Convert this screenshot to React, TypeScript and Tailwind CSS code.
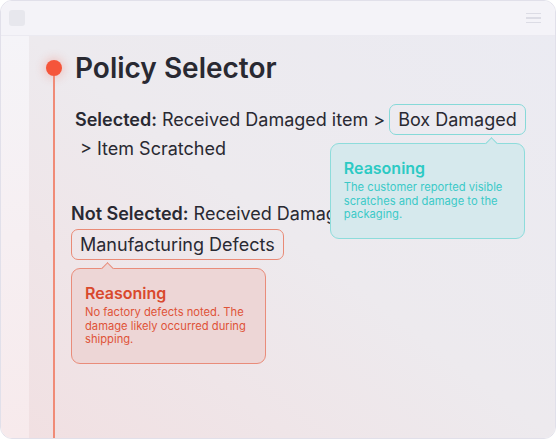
import React from "react";

const font = { fontFamily: "Inter, 'Noto Sans', sans-serif" };

function Reasoning({
  tone,
  text,
  className,
  arrowClass,
}: {
  tone: "teal" | "red";
  text: string;
  className: string;
  arrowClass: string;
}) {
  const teal = tone === "teal";
  return (
    <div
      className={`absolute z-10 w-[195px] rounded-[9px] border px-[13px] pt-[14px] pb-[16px] ${
        teal ? "border-[#8ddcdb] bg-[#d6e9ed]" : "border-[#e98c7a] bg-[#edd6d6]"
      } ${className}`}
    >
      {/* arrow */}
      <div
        className={`absolute top-[-5px] h-[9px] w-[9px] rotate-45 border-l border-t ${
          teal ? "border-[#8ddcdb] bg-[#d6e9ed]" : "border-[#e98c7a] bg-[#edd6d6]"
        } ${arrowClass}`}
      />
      <div
        className={`text-[16px] leading-[20px] font-semibold ${
          teal ? "text-[#2ccac4]" : "text-[#d9492d]"
        }`}
      >
        Reasoning
      </div>
      <p
        className={`mt-[3px] text-[11.2px] leading-[13.5px] ${
          teal ? "text-[#3cc9c8]" : "text-[#df5338]"
        }`}
      >
        {text}
      </p>
    </div>
  );
}

export default function App() {
  return (
    <div className="h-[439px] w-[556px] bg-white" style={font}>
      <div className="flex h-full w-full flex-col overflow-hidden rounded-[12px] border border-[#e1e0ea]">
        {/* Window bar */}
        <div className="flex h-[35px] shrink-0 items-center justify-between border-b border-[#ebeaf1] bg-[#f4f3f8] pl-[8px] pr-[14px]">
          <div className="h-[16px] w-[16px] rounded-[3px] bg-[#e7e7ed]" />
          <div className="flex w-[15px] flex-col gap-[3px]">
            <div className="h-[1.5px] bg-[#dcdce5]" />
            <div className="h-[1.5px] bg-[#dcdce5]" />
            <div className="h-[1.5px] bg-[#dcdce5]" />
          </div>
        </div>

        <div className="flex flex-1">
          {/* Side strip */}
          <div className="w-[28px] shrink-0 bg-gradient-to-b from-[#f5f4f8] to-[#f7eaec]" />

          {/* Main */}
          <div className="flex flex-1 bg-gradient-to-tr from-[#f1e0e2] via-[#edeaee] via-50% to-[#ebebf2]">
            {/* Timeline */}
            <div className="ml-[17px] flex w-[16px] flex-col items-center pt-[24px]">
              <div className="h-[16px] w-[16px] shrink-0 rounded-full bg-[#f5553a] shadow-[0_0_10px_2px_rgba(245,85,58,0.25)]" />
              <div className="w-[1.5px] flex-1 bg-[#f08b77]" />
            </div>

            {/* Content */}
            <div className="ml-[9px] flex flex-col pt-[15px] text-[#292932]">
              <h1 className="ml-[4px] text-[28px] leading-[34px] font-semibold">
                Policy Selector
              </h1>

              <div className="ml-[4px] mt-[19px] text-[18px]">
                <div className="flex items-center">
                  <span className="font-semibold">Selected:</span>
                  <span className="ml-[5px]">Received Damaged item &gt;</span>
                  <div className="relative ml-[4px]">
                    <div className="flex h-[31px] items-center rounded-[7px] border border-[#86d9d8] px-[8px]">
                      Box Damaged
                    </div>
                    <Reasoning
                      tone="teal"
                      text="The customer reported visible scratches and damage to the packaging."
                      className="right-[1px] top-[39px]"
                      arrowClass="right-[28px]"
                    />
                  </div>
                </div>
                <div className="ml-[5px] mt-[2px] leading-[24px]">&gt; Item Scratched</div>
              </div>

              <div className="mt-[41px] text-[18px]">
                <div className="leading-[24px] whitespace-nowrap">
                  <span className="font-semibold">Not Selected:</span> Received Damaged item &gt;
                </div>
                <div className="relative mt-[3px] self-start">
                  <div className="inline-flex h-[31px] items-center rounded-[7px] border border-[#e98a76] px-[8px]">
                    Manufacturing Defects
                  </div>
                  <Reasoning
                    tone="red"
                    text="No factory defects noted. The damage likely occurred during shipping."
                    className="left-0 top-[39px]"
                    arrowClass="left-[31px]"
                  />
                </div>
              </div>
            </div>
          </div>
        </div>
      </div>
    </div>
  );
}
